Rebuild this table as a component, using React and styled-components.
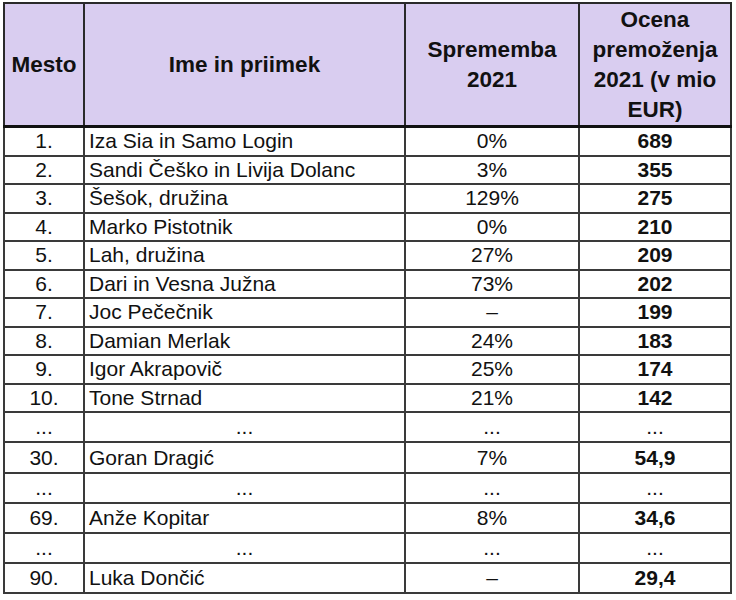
import React from 'react';
import styled, { createGlobalStyle } from 'styled-components';

const Global = createGlobalStyle`
  html, body { margin: 0; padding: 0; background: #fff; }
  body { font-family: "Liberation Sans", Arial, sans-serif; color: #000; }
`;

const Page = styled.div`
  padding: 2px 0 0 3px;
`;

const Table = styled.table`
  border-collapse: collapse;
  table-layout: fixed;
  width: 729px;
  border: 2px solid #111;
`;

const HeadCell = styled.th`
  background: #d9cdf0;
  font-weight: bold;
  font-size: 22.5px;
  line-height: 30px;
  text-align: center;
  vertical-align: middle;
  padding: 0;
  height: 121px;
  color: #111;
  border: 2px solid #2a2a2a;
  border-bottom: 3px solid #111;
`;

const Cell = styled.td`
  font-size: 21px;
  line-height: 24px;
  font-weight: ${p => (p.$bold ? 'bold' : 'normal')};
  text-align: ${p => (p.$left ? 'left' : 'center')};
  padding: 0 0 0 ${p => (p.$left ? '4px' : '0')};
  vertical-align: middle;
  border: 2px solid #3a3a3a;
  height: ${p => p.$h}px;
  white-space: nowrap;
  overflow: hidden;
  color: #111;
`;

const rows = [
  ['1.', 'Iza Sia in Samo Login', '0%', '689'],
  ['2.', 'Sandi Češko in Livija Dolanc', '3%', '355'],
  ['3.', 'Šešok, družina', '129%', '275'],
  ['4.', 'Marko Pistotnik', '0%', '210'],
  ['5.', 'Lah, družina', '27%', '209'],
  ['6.', 'Dari in Vesna Južna', '73%', '202'],
  ['7.', 'Joc Pečečnik', '–', '199'],
  ['8.', 'Damian Merlak', '24%', '183'],
  ['9.', 'Igor Akrapovič', '25%', '174'],
  ['10.', 'Tone Strnad', '21%', '142'],
  ['...', '...', '...', '...', true],
  ['30.', 'Goran Dragić', '7%', '54,9'],
  ['...', '...', '...', '...', true],
  ['69.', 'Anže Kopitar', '8%', '34,6'],
  ['...', '...', '...', '...', true],
  ['90.', 'Luka Dončić', '–', '29,4'],
];

const heights = [26.5, 26.5, 26.5, 26.5, 26.5, 26.5, 26.5, 26.5, 26.5, 26.5, 28, 29, 28, 28, 28, 28];

export default function App() {
  return (
    <Page>
      <Global />
      <Table>
        <colgroup>
          <col style={{ width: 80 }} />
          <col style={{ width: 321 }} />
          <col style={{ width: 174 }} />
          <col style={{ width: 152 }} />
        </colgroup>
        <thead>
          <tr>
            <HeadCell>Mesto</HeadCell>
            <HeadCell>Ime in priimek</HeadCell>
            <HeadCell>Sprememba<br />2021</HeadCell>
            <HeadCell>Ocena<br />premoženja<br />2021 (v mio<br />EUR)</HeadCell>
          </tr>
        </thead>
        <tbody>
          {rows.map((r, i) => {
            const dots = r[4];
            const h = heights[i];
            return (
              <tr key={i}>
                <Cell $h={h}>{r[0]}</Cell>
                <Cell $h={h} $left={!dots}>{r[1]}</Cell>
                <Cell $h={h}>{r[2]}</Cell>
                <Cell $h={h} $bold={!dots}>{r[3]}</Cell>
              </tr>
            );
          })}
        </tbody>
      </Table>
    </Page>
  );
}
